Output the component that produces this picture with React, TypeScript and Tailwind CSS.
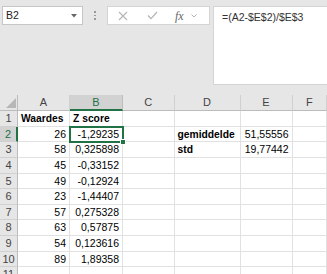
import React from "react";

type V = string | { t: string; bold?: boolean };

const cols = ["A", "B", "C", "D", "E", "F"];

const rows: V[][] = [
  [{ t: "Waardes", bold: true }, { t: "Z score", bold: true }, "", "", "", ""],
  ["26", "-1,29235", "", { t: "gemiddelde", bold: true }, "51,55556", ""],
  ["58", "0,325898", "", { t: "std", bold: true }, "19,77442", ""],
  ["45", "-0,33152", "", "", "", ""],
  ["49", "-0,12924", "", "", "", ""],
  ["23", "-1,44407", "", "", "", ""],
  ["57", "0,275328", "", "", "", ""],
  ["63", "0,57875", "", "", "", ""],
  ["54", "0,123616", "", "", "", ""],
  ["89", "1,89358", "", "", "", ""],
  ["", "", "", "", "", ""],
];

const font = { fontFamily: '"Liberation Sans", Arial, sans-serif' };

const Cell = ({ v }: { v: V }) => {
  if (typeof v === "object") {
    return (
      <div className="h-[15.65px] min-w-0 border-r border-b border-[#e1e1e1] bg-white pl-[3px] text-left text-[10.3px] leading-[15px] font-bold text-black whitespace-nowrap">
        {v.t}
      </div>
    );
  }
  return (
    <div className="h-[15.65px] min-w-0 border-r border-b border-[#e1e1e1] bg-white pr-[3px] text-right text-[10.5px] leading-[15px] text-black whitespace-nowrap">
      {v}
    </div>
  );
};

export default function App() {
  return (
    <div className="w-[327px] h-[274px] overflow-hidden bg-white" style={font}>
      {/* formula bar */}
      <div className="h-[95px] bg-[#e6e6e6] flex items-start pt-[6px] pl-[2px]">
        <div className="w-[81px] h-[19px] bg-white border border-[#c6c6c6] flex items-center justify-between pl-[3px] pr-[5px]">
          <span className="text-[10.5px] text-[#222]">B2</span>
          <svg width="6" height="4" viewBox="0 0 6 4">
            <path d="M0 0h6L3 3.5z" fill="#666" />
          </svg>
        </div>
        <div className="w-[24px] h-[19px] flex flex-col items-center justify-center gap-[2px]">
          <div className="w-[1.5px] h-[1.5px] bg-[#999]" />
          <div className="w-[1.5px] h-[1.5px] bg-[#999]" />
          <div className="w-[1.5px] h-[1.5px] bg-[#999]" />
        </div>
        <div className="w-[103px] h-[19px] bg-white border border-[#d4d4d4] flex items-center">
          <svg className="ml-[10px]" width="10" height="10" viewBox="0 0 10 10">
            <path d="M1 1l8 8M9 1l-8 8" stroke="#b4b4b4" strokeWidth="1.1" />
          </svg>
          <svg className="ml-[19px]" width="11" height="9" viewBox="0 0 11 9">
            <path d="M1 4.5l3 3.2L10 1" stroke="#b4b4b4" strokeWidth="1.2" fill="none" />
          </svg>
          <span
            className="ml-[17px] text-[12px] italic text-[#666]"
            style={{ fontFamily: '"Liberation Serif", serif' }}
          >
            fx
          </span>
          <svg className="ml-[7px]" width="6" height="4" viewBox="0 0 6 4">
            <path d="M0.5 0.5l2.5 2.5 2.5-2.5" stroke="#aaa" strokeWidth="0.9" fill="none" />
          </svg>
        </div>
        <div className="ml-[3px] flex-1 h-[79px] bg-white border-l border-t border-b border-[#d4d4d4] pl-[8px] pt-[3px] text-[10.5px] text-[#333]">
          =(A2-$E$2)/$E$3
        </div>
      </div>

      {/* grid */}
      <div className="relative grid grid-cols-[18px_52px_53px_51.5px_66px_52px_34.5px]">
        {/* header row */}
        <div className="h-[16px] bg-[#e6e6e6] border-r border-b border-[#bcbcbc] flex items-end justify-end pr-[1px] pb-[2px]">
          <svg width="10" height="10" viewBox="0 0 10 10">
            <path d="M10 0V10H0z" fill="#b7b7b7" />
          </svg>
        </div>
        {cols.map((c) => (
          <div
            key={c}
            className={
              c === "B"
                ? "h-[16px] bg-[#d2d2d2] border-r border-[#bcbcbc] border-b-2 border-b-[#217346] text-center text-[11px] leading-[15px] text-[#217346]"
                : "h-[16px] bg-[#e6e6e6] border-r border-b border-[#d0d0d0] border-b-[#bcbcbc] text-center text-[11px] leading-[15px] text-[#444]"
            }
          >
            {c}
          </div>
        ))}

        {rows.map((r, i) => (
          <React.Fragment key={i}>
            <div
              className={
                i === 1
                  ? "h-[15.65px] bg-[#d2d2d2] border-r-2 border-r-[#217346] border-b border-b-[#d0d0d0] text-center text-[11px] leading-[15px] text-[#217346]"
                  : "h-[15.65px] bg-[#e6e6e6] border-r border-b border-[#d0d0d0] border-r-[#bcbcbc] text-center text-[11px] leading-[15px] text-[#444]"
              }
            >
              {i + 1}
            </div>
            {r.map((v, j) => (
              <Cell key={j} v={v} />
            ))}
          </React.Fragment>
        ))}

        {/* selection B2 */}
        <div className="absolute left-[69px] top-[30.5px] w-[55px] h-[17.5px] border-2 border-[#217346] pointer-events-none">
          <div className="absolute -right-[4px] -bottom-[4px] w-[6px] h-[6px] bg-[#217346] border border-white" />
        </div>
      </div>
    </div>
  );
}
